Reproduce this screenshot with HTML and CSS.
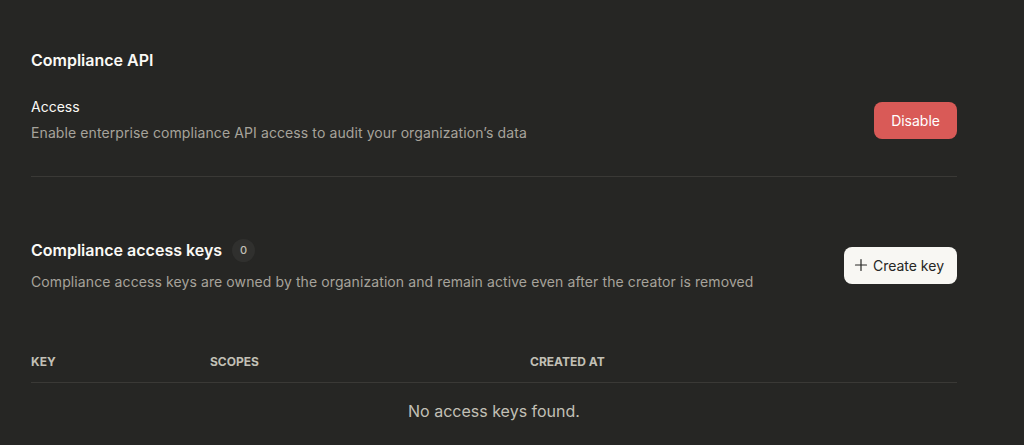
FILE: index.html
```html
<!DOCTYPE html>
<html lang="en">
<head>
    <meta charset="UTF-8">
    <meta name="viewport" content="width=device-width, initial-scale=1.0">
    <title>Compliance API</title>
    <link rel="stylesheet" href="styles.css">
</head>
<body>
    <main class="page">
        <section class="section">
            <h2 class="section-title">Compliance API</h2>
            <div class="row">
                <div class="row-text">
                    <div class="row-label">Access</div>
                    <div class="row-desc">Enable enterprise compliance API access to audit your organization’s data</div>
                </div>
                <button class="btn btn-danger">Disable</button>
            </div>
        </section>

        <section class="section keys">
            <div class="row">
                <div class="row-text">
                    <h2 class="section-title inline">Compliance access keys <span class="count">0</span></h2>
                    <div class="row-desc">Compliance access keys are owned by the organization and remain active even after the creator is removed</div>
                </div>
                <button class="btn btn-light">
                    <svg width="14" height="14" viewBox="0 0 14 14" fill="none" stroke="currentColor" stroke-width="1.2" stroke-linecap="round">
                        <path d="M7 1.5v11M1.5 7h11"/>
                    </svg>
                    Create key
                </button>
            </div>

            <div class="table">
                <div class="table-head">
                    <div class="col-key">Key</div>
                    <div class="col-scopes">Scopes</div>
                    <div class="col-created">Created at</div>
                </div>
                <div class="table-empty">No access keys found.</div>
            </div>
        </section>
    </main>
</body>
</html>
```

FILE: styles.css
```css
body {
    margin: 0;
    background-color: #262624;
    color: #faf9f5;
    font-family: Inter, "Noto Sans", sans-serif;
}
.page {
    width: 926px;
    padding: 48px 0 0 31px;
}
.section-title {
    margin: 0;
    font-size: 16px;
    font-weight: 600;
    line-height: 24px;
}
.section-title.inline {
    display: flex;
    align-items: center;
    gap: 10px;
}
.count {
    display: inline-flex;
    align-items: center;
    justify-content: center;
    width: 23px;
    height: 23px;
    border-radius: 50%;
    background-color: #30302e;
    color: #c2c0b6;
    font-size: 11px;
    font-weight: 500;
}
.row {
    display: flex;
    align-items: center;
    justify-content: space-between;
}
.section:first-child .row {
    margin-top: 25px;
    padding-bottom: 33px;
    border-bottom: 1px solid #3a3936;
}
.row-label {
    font-size: 14px;
    line-height: 20px;
}
.row-desc {
    margin-top: 6px;
    font-size: 14px;
    line-height: 20px;
    letter-spacing: 0.1px;
    color: #a6a39b;
}
.keys .row-desc {
    margin-top: 10px;
}
.keys {
    margin-top: 61px;
}
.btn {
    display: inline-flex;
    align-items: center;
    gap: 5px;
    height: 37px;
    padding: 0 17px;
    border: none;
    border-radius: 8px;
    font-family: inherit;
    font-size: 14px;
    cursor: pointer;
}
.btn-danger {
    background-color: #d95a57;
    color: #fff;
}
.btn-light {
    background-color: #f8f7f3;
    color: #262624;
    padding: 0 13px 0 10px;
}
.table {
    margin-top: 48px;
}
.table-head {
    display: flex;
    height: 42px;
    align-items: center;
    border-bottom: 1px solid #3a3936;
    font-size: 12px;
    font-weight: 700;
    text-transform: uppercase;
    color: #c2c0b6;
}
.col-key {
    width: 179px;
}
.col-scopes {
    width: 320px;
}
.table-empty {
    padding: 18px 0;
    text-align: center;
    font-size: 16px;
    color: #c2c0b6;
}
```
